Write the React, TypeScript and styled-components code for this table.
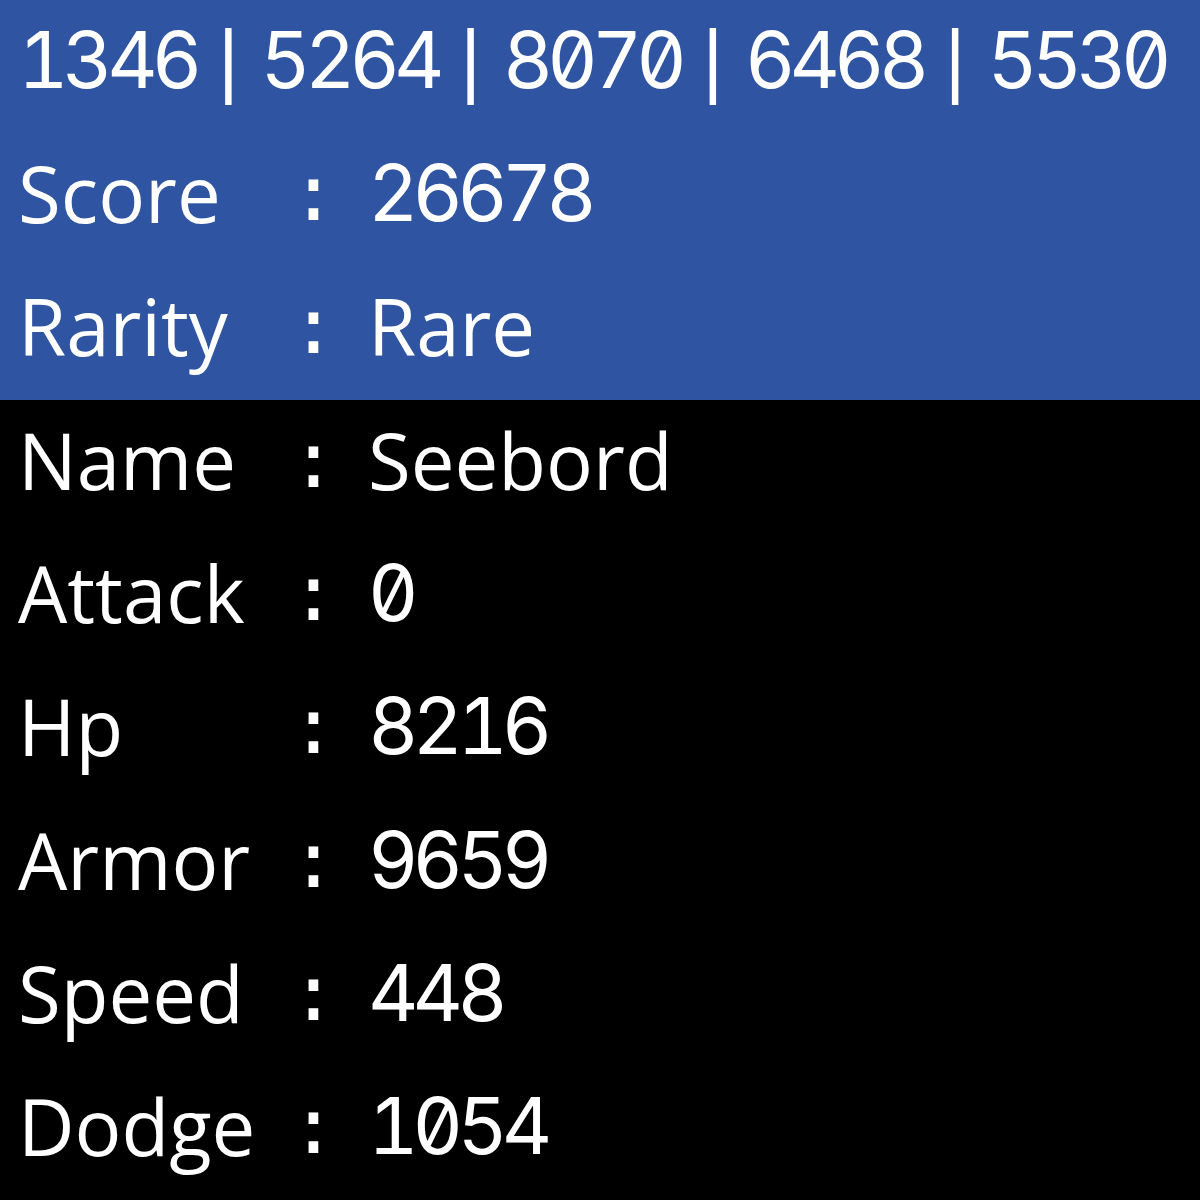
import styled, { createGlobalStyle } from 'styled-components';
import { Fragment } from 'react';

const GlobalStyle = createGlobalStyle`
  html, body {
    margin: 0;
    padding: 0;
    background-color: #000;
  }
`;

const Screen = styled.div`
  width: 1200px;
  height: 1200px;
  display: flex;
  flex-direction: column;
  color: #fff;
  overflow: hidden;
`;

const Section = styled.div<{ tone: 'blue' | 'dark'; rows: number }>`
  flex: ${props => props.rows};
  display: flex;
  flex-direction: column;
  background-color: ${props => props.tone === 'blue' ? '#2f54a1' : '#000'};
`;

const Row = styled.div`
  flex: 1;
  display: flex;
  align-items: center;
  padding-left: 18px;
  padding-bottom: 14px;
  font-size: 78px;
  line-height: 1;
  white-space: pre;
`;

const Digits = styled.span`
  font-family: Inter, sans-serif;
  font-feature-settings: "tnum", "zero";
  letter-spacing: -6px;
`;

const Separator = styled.span`
  width: 64px;
  text-align: center;
  font-family: "DejaVu Sans Mono", monospace;
  font-size: 76px;
`;

const Label = styled.span`
  width: 272px;
  font-family: "Open Sans", sans-serif;
`;

const Colon = styled.span`
  width: 78px;
  font-family: "DejaVu Sans Mono", monospace;
`;

const Value = styled.span<{ numeric?: boolean }>`
  font-family: ${props => props.numeric ? 'Inter, sans-serif' : '"Open Sans", sans-serif'};
  font-feature-settings: "tnum", "zero";
  letter-spacing: ${props => props.numeric ? '-6px' : '0'};
`;

const header = ['1346', '5264', '8070', '6468', '5530'];

const stats: { label: string; value: string }[] = [
  { label: 'Score', value: '26678' },
  { label: 'Rarity', value: 'Rare' },
  { label: 'Name', value: 'Seebord' },
  { label: 'Attack', value: '0' },
  { label: 'Hp', value: '8216' },
  { label: 'Armor', value: '9659' },
  { label: 'Speed', value: '448' },
  { label: 'Dodge', value: '1054' },
];

const StatRow = ({ label, value }: { label: string; value: string }) => (
  <Row>
    <Label>{label}</Label>
    <Colon>:</Colon>
    <Value numeric={/^\d+$/.test(value)}>{value}</Value>
  </Row>
);

export default function App() {
  return (
    <>
      <GlobalStyle />
      <Screen>
        <Section tone="blue" rows={3}>
          <Row>
            {header.map((n, i) => (
              <Fragment key={n}>
                {i > 0 && <Separator>|</Separator>}
                <Digits>{n}</Digits>
              </Fragment>
            ))}
          </Row>
          {stats.slice(0, 2).map(s => <StatRow key={s.label} {...s} />)}
        </Section>
        <Section tone="dark" rows={6}>
          {stats.slice(2).map(s => <StatRow key={s.label} {...s} />)}
        </Section>
      </Screen>
    </>
  );
}
